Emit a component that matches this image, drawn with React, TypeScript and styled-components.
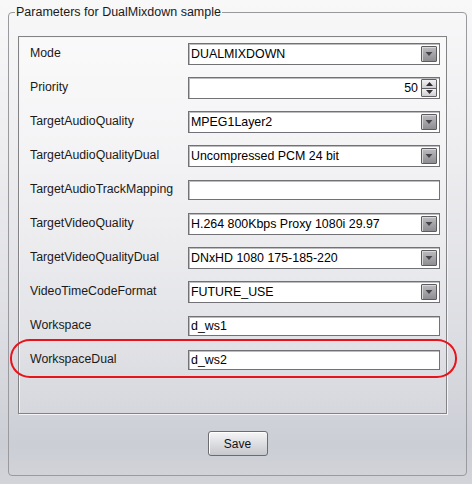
import React from 'react';
import styled, { createGlobalStyle } from 'styled-components';

const GlobalStyle = createGlobalStyle`
  html, body {
    margin: 0;
    padding: 0;
  }
  body {
    width: 472px;
    height: 484px;
    overflow: hidden;
    font-family: "Liberation Sans", Arial, sans-serif;
    font-size: 12px;
    color: #1a1a1a;
    background: linear-gradient(#f8f8f9 0%, #ececef 35%, #dcdde2 70%, #cbced5 92%, #d3d4d9 100%);
  }
`;

const Page = styled.div`
  padding: 5px 5px 0 8px;
`;

const Frame = styled.fieldset`
  box-sizing: border-box;
  width: 459px;
  margin: 0;
  padding: 17px 19px 19px 9px;
  border: 1px solid #9a9a9e;
  border-radius: 4px;
  min-inline-size: 0;
`;

const Legend = styled.legend`
  margin-left: -3px;
  padding: 0 1px;
  line-height: 14px;
  font-size: 12.5px;
  color: #1a1a1a;
`;

const Panel = styled.div`
  box-sizing: border-box;
  width: 429px;
  height: 378px;
  padding: 0 6px 0 11px;
  border: 1px solid #838386;
  box-shadow: 1px 1px 0 #f4f4f6, inset 1px 1px 0 #f4f4f6;
  background: linear-gradient(rgba(255, 255, 255, 0.45), rgba(255, 255, 255, 0.1));
`;

const Row = styled.div`
  position: relative;
  display: grid;
  grid-template-columns: 158px 252px;
  align-items: start;
  height: 34px;
`;

const Label = styled.div`
  padding-top: 9px;
  line-height: 14px;
  font-size: 12.3px;
  white-space: nowrap;
`;

const FieldBox = styled.div<{ $text?: boolean }>`
  box-sizing: border-box;
  display: flex;
  align-items: center;
  height: ${(p) => (p.$text ? 20 : 22)}px;
  margin-top: ${(p) => (p.$text ? 7 : 6)}px;
  padding: 0 2px 0 2px;
  background: #ffffff;
  border: 1px solid #727276;
  box-shadow: inset 1px 1px 0 #bdbdc0;
  color: #000;
  font-size: 12.4px;
  white-space: nowrap;
`;

const FieldText = styled.span<{ $right?: boolean }>`
  flex: 1;
  overflow: hidden;
  text-align: ${(p) => (p.$right ? 'right' : 'left')};
  padding-right: ${(p) => (p.$right ? 3 : 0)}px;
  line-height: 16px;
`;

const ArrowButton = styled.div`
  box-sizing: border-box;
  display: flex;
  align-items: center;
  justify-content: center;
  width: 16px;
  height: 16px;
  border: 1px solid #5c5c60;
  border-radius: 1px;
  background: linear-gradient(#bcbcc0, #8e8e92);
  box-shadow: inset 1px 1px 0 #d8d8da;
`;

const SpinBox = styled.div`
  display: flex;
  flex-direction: column;
  width: 16px;
  height: 18px;
  border: 1px solid #606064;
  border-radius: 1px;
  box-sizing: border-box;
`;

const SpinHalf = styled.div<{ $top?: boolean }>`
  flex: 1;
  display: flex;
  align-items: center;
  justify-content: center;
  background: linear-gradient(#f2f2f4, #cfcfd3);
  border-bottom: ${(p) => (p.$top ? '1px solid #606064' : 'none')};
`;

const Highlight = styled.div`
  position: absolute;
  left: -20px;
  top: -4px;
  width: 447px;
  height: 39px;
  box-sizing: border-box;
  border: 2px solid #e8141c;
  border-radius: 20px / 19px;
  pointer-events: none;
`;

const ButtonRow = styled.div`
  display: flex;
  justify-content: center;
  margin: 17px -19px 0 -9px;
`;

const SaveButton = styled.button`
  box-sizing: border-box;
  width: 60px;
  height: 25px;
  padding: 0;
  border: 1px solid #6c6c70;
  border-radius: 3px;
  background: linear-gradient(#f6f6f8, #d8d9dd 60%, #c6c8cd);
  box-shadow: inset 1px 1px 0 #ffffff;
  font-family: "Liberation Sans", Arial, sans-serif;
  font-size: 12px;
  color: #111;
`;

const DownArrow = () => (
  <svg width="8" height="6" viewBox="0 0 8 6">
    <path d="M0.5 1 L7.5 1 L4 5 Z" fill="#46464a" />
  </svg>
);

const SpinArrow = ({ up }: { up?: boolean }) => (
  <svg width="7" height="4" viewBox="0 0 7 4">
    <path d={up ? 'M0 4 L7 4 L3.5 0 Z' : 'M0 0 L7 0 L3.5 4 Z'} fill="#303034" />
  </svg>
);

type Param = {
  name: string;
  kind: 'combo' | 'spin' | 'text';
  value: string;
  marked?: boolean;
};

const params: Param[] = [
  { name: 'Mode', kind: 'combo', value: 'DUALMIXDOWN' },
  { name: 'Priority', kind: 'spin', value: '50' },
  { name: 'TargetAudioQuality', kind: 'combo', value: 'MPEG1Layer2' },
  { name: 'TargetAudioQualityDual', kind: 'combo', value: 'Uncompressed PCM 24 bit' },
  { name: 'TargetAudioTrackMapping', kind: 'text', value: '' },
  { name: 'TargetVideoQuality', kind: 'combo', value: 'H.264 800Kbps Proxy 1080i 29.97' },
  { name: 'TargetVideoQualityDual', kind: 'combo', value: 'DNxHD 1080 175-185-220' },
  { name: 'VideoTimeCodeFormat', kind: 'combo', value: 'FUTURE_USE' },
  { name: 'Workspace', kind: 'text', value: 'd_ws1' },
  { name: 'WorkspaceDual', kind: 'text', value: 'd_ws2', marked: true },
];

const Field = ({ param }: { param: Param }) => {
  if (param.kind === 'combo') {
    return (
      <FieldBox>
        <FieldText>{param.value}</FieldText>
        <ArrowButton>
          <DownArrow />
        </ArrowButton>
      </FieldBox>
    );
  }
  if (param.kind === 'spin') {
    return (
      <FieldBox>
        <FieldText $right>{param.value}</FieldText>
        <SpinBox>
          <SpinHalf $top>
            <SpinArrow up />
          </SpinHalf>
          <SpinHalf>
            <SpinArrow />
          </SpinHalf>
        </SpinBox>
      </FieldBox>
    );
  }
  return (
    <FieldBox $text>
      <FieldText>{param.value}</FieldText>
    </FieldBox>
  );
};

export default function App() {
  return (
    <>
      <GlobalStyle />
      <Page>
        <Frame>
          <Legend>Parameters for DualMixdown sample</Legend>
          <Panel>
            {params.map((p) => (
              <Row key={p.name}>
                <Label>{p.name}</Label>
                <Field param={p} />
                {p.marked && <Highlight />}
              </Row>
            ))}
          </Panel>
          <ButtonRow>
            <SaveButton type="button">Save</SaveButton>
          </ButtonRow>
        </Frame>
      </Page>
    </>
  );
}
